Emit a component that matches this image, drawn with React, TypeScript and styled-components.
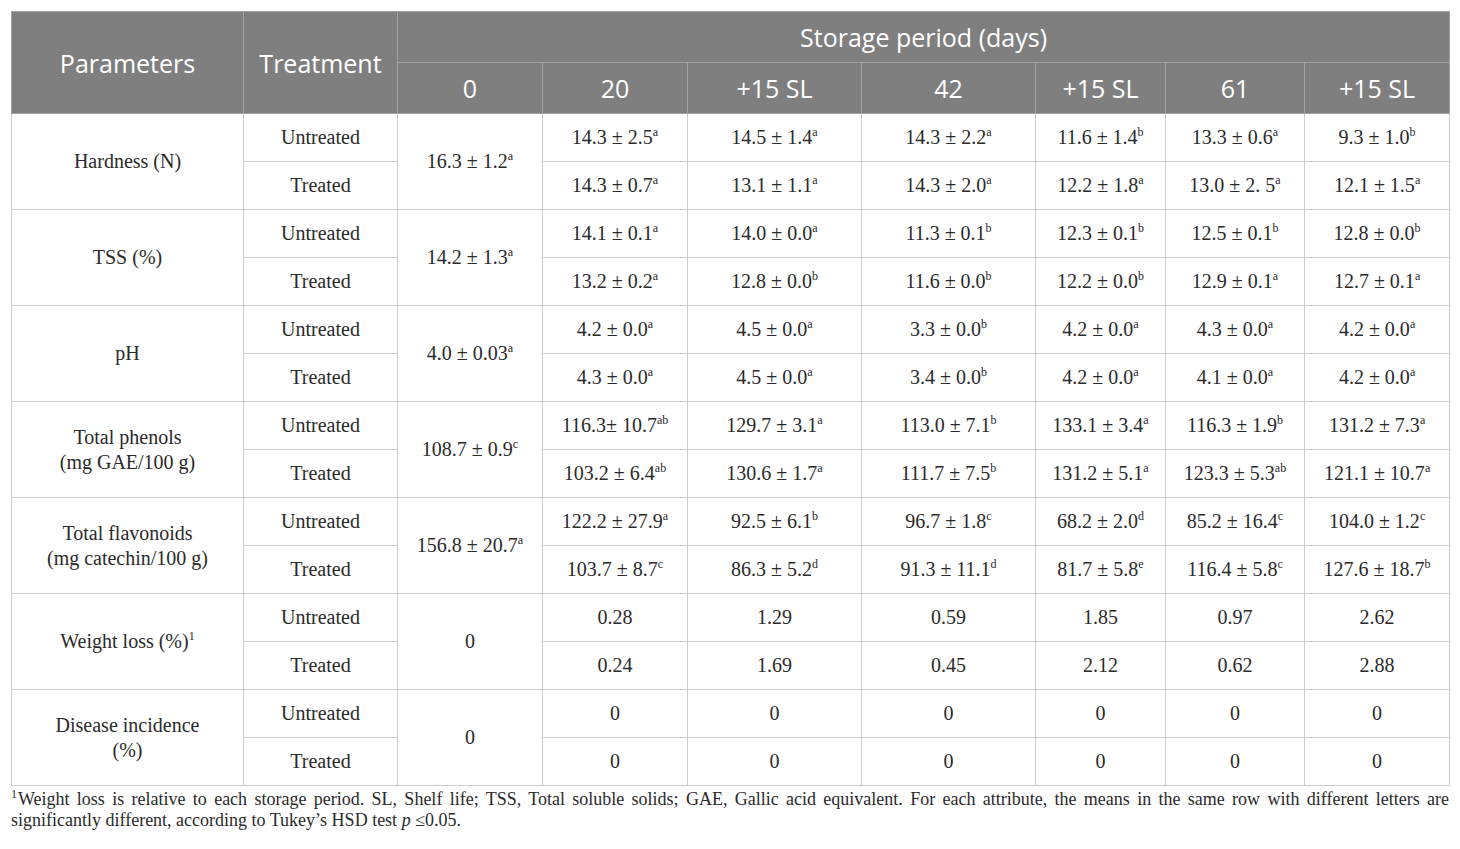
import React from 'react';
import styled, { createGlobalStyle } from 'styled-components';

type Val = [string, string?];

interface ParamRow {
  label: string[];
  note?: string;
  zero: Val;
  untreated: Val[];
  treated: Val[];
}

const periods = ['0', '20', '+15 SL', '42', '+15 SL', '61', '+15 SL'];
const colWidths = [232, 154, 145, 145, 174, 174, 130, 139, 145];

const zeros: Val[] = ['0', '0', '0', '0', '0', '0'].map((v) => [v]);

const rows: ParamRow[] = [
  {
    label: ['Hardness (N)'],
    zero: ['16.3 ± 1.2', 'a'],
    untreated: [
      ['14.3 ± 2.5', 'a'],
      ['14.5 ± 1.4', 'a'],
      ['14.3 ± 2.2', 'a'],
      ['11.6 ± 1.4', 'b'],
      ['13.3 ± 0.6', 'a'],
      ['9.3 ± 1.0', 'b'],
    ],
    treated: [
      ['14.3 ± 0.7', 'a'],
      ['13.1 ± 1.1', 'a'],
      ['14.3 ± 2.0', 'a'],
      ['12.2 ± 1.8', 'a'],
      ['13.0 ± 2. 5', 'a'],
      ['12.1 ± 1.5', 'a'],
    ],
  },
  {
    label: ['TSS (%)'],
    zero: ['14.2 ± 1.3', 'a'],
    untreated: [
      ['14.1 ± 0.1', 'a'],
      ['14.0 ± 0.0', 'a'],
      ['11.3 ± 0.1', 'b'],
      ['12.3 ± 0.1', 'b'],
      ['12.5 ± 0.1', 'b'],
      ['12.8 ± 0.0', 'b'],
    ],
    treated: [
      ['13.2 ± 0.2', 'a'],
      ['12.8 ± 0.0', 'b'],
      ['11.6 ± 0.0', 'b'],
      ['12.2 ± 0.0', 'b'],
      ['12.9 ± 0.1', 'a'],
      ['12.7 ± 0.1', 'a'],
    ],
  },
  {
    label: ['pH'],
    zero: ['4.0 ± 0.03', 'a'],
    untreated: [
      ['4.2 ± 0.0', 'a'],
      ['4.5 ± 0.0', 'a'],
      ['3.3 ± 0.0', 'b'],
      ['4.2 ± 0.0', 'a'],
      ['4.3 ± 0.0', 'a'],
      ['4.2 ± 0.0', 'a'],
    ],
    treated: [
      ['4.3 ± 0.0', 'a'],
      ['4.5 ± 0.0', 'a'],
      ['3.4 ± 0.0', 'b'],
      ['4.2 ± 0.0', 'a'],
      ['4.1 ± 0.0', 'a'],
      ['4.2 ± 0.0', 'a'],
    ],
  },
  {
    label: ['Total phenols', '(mg GAE/100 g)'],
    zero: ['108.7 ± 0.9', 'c'],
    untreated: [
      ['116.3± 10.7', 'ab'],
      ['129.7 ± 3.1', 'a'],
      ['113.0 ± 7.1', 'b'],
      ['133.1 ± 3.4', 'a'],
      ['116.3 ± 1.9', 'b'],
      ['131.2 ± 7.3', 'a'],
    ],
    treated: [
      ['103.2 ± 6.4', 'ab'],
      ['130.6 ± 1.7', 'a'],
      ['111.7 ± 7.5', 'b'],
      ['131.2 ± 5.1', 'a'],
      ['123.3 ± 5.3', 'ab'],
      ['121.1 ± 10.7', 'a'],
    ],
  },
  {
    label: ['Total flavonoids', '(mg catechin/100 g)'],
    zero: ['156.8 ± 20.7', 'a'],
    untreated: [
      ['122.2 ± 27.9', 'a'],
      ['92.5 ± 6.1', 'b'],
      ['96.7 ± 1.8', 'c'],
      ['68.2 ± 2.0', 'd'],
      ['85.2 ± 16.4', 'c'],
      ['104.0 ± 1.2', 'c'],
    ],
    treated: [
      ['103.7 ± 8.7', 'c'],
      ['86.3 ± 5.2', 'd'],
      ['91.3 ± 11.1', 'd'],
      ['81.7 ± 5.8', 'e'],
      ['116.4 ± 5.8', 'c'],
      ['127.6 ± 18.7', 'b'],
    ],
  },
  {
    label: ['Weight loss (%)'],
    note: '1',
    zero: ['0'],
    untreated: ['0.28', '1.29', '0.59', '1.85', '0.97', '2.62'].map((v) => [v] as Val),
    treated: ['0.24', '1.69', '0.45', '2.12', '0.62', '2.88'].map((v) => [v] as Val),
  },
  {
    label: ['Disease incidence', '(%)'],
    zero: ['0'],
    untreated: zeros,
    treated: zeros,
  },
];

const GlobalStyle = createGlobalStyle`
  html, body {
    margin: 0;
    padding: 0;
    background: #fff;
  }
`;

const Page = styled.div`
  padding: 11px 11px 0 11px;
  width: 1438px;
`;

const Table = styled.table`
  border-collapse: collapse;
  table-layout: fixed;
  width: 1438px;
  font-family: 'Liberation Serif', 'Times New Roman', serif;
  color: #2a2a2a;
`;

const HeadRow = styled.tr`
  height: 51px;
`;

const HeadCell = styled.th`
  background: #7f7f7f;
  color: #fff;
  font-family: 'Open Sans', 'Noto Sans', sans-serif;
  font-weight: 400;
  font-size: 25px;
  text-align: center;
  vertical-align: middle;
  padding: 0;
  border: 1px solid #a3a3a3;
  line-height: 32px;
`;

const BodyRow = styled.tr`
  height: 48px;
`;

const Cell = styled.td`
  border: 1px solid #cccccc;
  text-align: center;
  vertical-align: middle;
  font-size: 20px;
  line-height: 25px;
  padding: 0;
  white-space: nowrap;
`;

const Sup = styled.sup`
  font-size: 12px;
  line-height: 0;
  vertical-align: 8px;
`;

const NoteMark = styled.sup`
  font-size: 12px;
  line-height: 0;
  vertical-align: 7px;
  margin-right: 1px;
`;

const Footnote = styled.p`
  margin: 3px 0 0 0;
  font-family: 'Liberation Serif', 'Times New Roman', serif;
  font-size: 18px;
  line-height: 21px;
  color: #2a2a2a;
  text-align: justify;
`;

function Value({ v }: { v: Val }) {
  return (
    <>
      {v[0]}
      {v[1] && <Sup>{v[1]}</Sup>}
    </>
  );
}

export default function App() {
  return (
    <Page>
      <GlobalStyle />
      <Table>
        <colgroup>
          {colWidths.map((w, i) => (
            <col key={i} style={{ width: w }} />
          ))}
        </colgroup>
        <thead>
          <HeadRow>
            <HeadCell rowSpan={2}>Parameters</HeadCell>
            <HeadCell rowSpan={2}>Treatment</HeadCell>
            <HeadCell colSpan={7}>Storage period (days)</HeadCell>
          </HeadRow>
          <HeadRow>
            {periods.map((p, i) => (
              <HeadCell key={i}>{p}</HeadCell>
            ))}
          </HeadRow>
        </thead>
        <tbody>
          {rows.map((r, i) => (
            <React.Fragment key={i}>
              <BodyRow>
                <Cell rowSpan={2}>
                  {r.label.map((l, j) => (
                    <div key={j}>
                      {l}
                      {r.note && j === r.label.length - 1 && <Sup>{r.note}</Sup>}
                    </div>
                  ))}
                </Cell>
                <Cell>Untreated</Cell>
                <Cell rowSpan={2}>
                  <Value v={r.zero} />
                </Cell>
                {r.untreated.map((v, j) => (
                  <Cell key={j}>
                    <Value v={v} />
                  </Cell>
                ))}
              </BodyRow>
              <BodyRow>
                <Cell>Treated</Cell>
                {r.treated.map((v, j) => (
                  <Cell key={j}>
                    <Value v={v} />
                  </Cell>
                ))}
              </BodyRow>
            </React.Fragment>
          ))}
        </tbody>
      </Table>
      <Footnote>
        <NoteMark>1</NoteMark>Weight loss is relative to each storage period. SL, Shelf life; TSS, Total soluble solids; GAE, Gallic acid
        equivalent. For each attribute, the means in the same row with different letters are significantly different,
        according to Tukey’s HSD test <i>p</i> ≤0.05.
      </Footnote>
    </Page>
  );
}
